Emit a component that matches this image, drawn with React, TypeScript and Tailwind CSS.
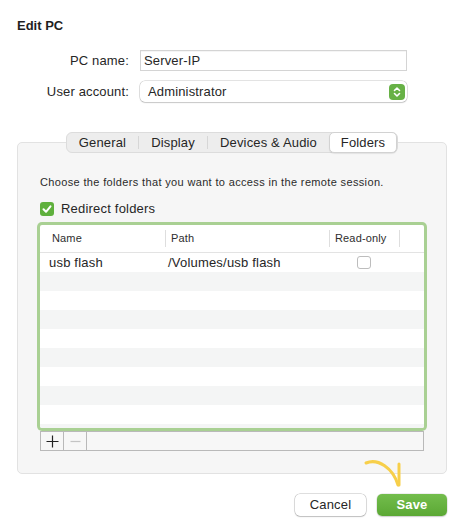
import React from 'react';

const tabs = [
    { label: 'General', width: 'w-[71px]' },
    { label: 'Display', width: 'w-[68px]' },
    { label: 'Devices & Audio', width: 'w-[121px]' },
    { label: 'Folders', width: 'w-[68px]' },
];

const folders = [{ name: 'usb flash', path: '/Volumes/usb flash', readOnly: false }];

const HeaderCell = ({ label, first }: { label?: string; first?: boolean }) => (
    <div className="flex items-center h-full">
        {!first && <span className="h-[17px] w-px bg-[#dedede]" />}
        {label && <span className={first ? 'pl-[12px]' : 'pl-[5px]'}>{label}</span>}
    </div>
);

const App = () => {
    const rows = Array.from({ length: 10 }, (_, i) => folders[i] ?? null);

    return (
        <div className="w-[464px] h-[522px] bg-white text-[#262626] font-['Liberation_Sans',Arial,sans-serif] px-[17px] pt-[18px]">
            <h1 className="text-[13px] leading-[16px] font-bold text-[#1f1f1f]">Edit PC</h1>

            {/* PC name / account */}
            <div className="mt-[16px] grid grid-cols-[112px_267px] gap-x-[11px] gap-y-[10px] items-center text-[13px] tracking-[0.15px]">
                <label className="text-right">PC name:</label>
                <div className="h-[21px] border border-[#d4d4d4] bg-white flex items-center pl-[3px] shadow-[inset_0_1px_0_rgba(0,0,0,0.04)]">
                    Server-IP
                </div>
                <label className="text-right">User account:</label>
                <div className="h-[21px] rounded-[5px] bg-white flex items-center justify-between pl-[8px] pr-[2px] shadow-[0_0_0_0.5px_rgba(0,0,0,0.22),0_1px_1.5px_rgba(0,0,0,0.12)]">
                    <span>Administrator</span>
                    <span className="w-[16px] h-[16px] rounded-[4px] bg-[#67b146] flex items-center justify-center">
                        <svg width="16" height="16" viewBox="0 0 16 16" fill="none" stroke="white" strokeWidth="1.6" strokeLinecap="round" strokeLinejoin="round">
                            <path d="M5.5 6.5 L8 4 L10.5 6.5" />
                            <path d="M5.5 9.5 L8 12 L10.5 9.5" />
                        </svg>
                    </span>
                </div>
            </div>

            {/* Segmented tabs */}
            <div className="relative z-10 mt-[30px] flex justify-center">
                <div className="flex h-[21px] rounded-[6px] bg-[#ededed] border border-[#dcdcdc] text-[13px] tracking-[0.15px]">
                    {tabs.map((tab, i) => {
                        const active = tab.label === 'Folders';
                        return (
                            <div key={tab.label} className="flex items-center">
                                {i > 0 && i < 3 && <span className="h-[13px] w-px bg-[#d6d6d6]" />}
                                <div
                                    className={`${tab.width} h-[21px] -my-px flex items-center justify-center ${
                                        active ? 'bg-white rounded-[5px] border border-[#d2d2d2] shadow-[0_1px_1px_rgba(0,0,0,0.08)]' : ''
                                    }`}
                                >
                                    {tab.label}
                                </div>
                            </div>
                        );
                    })}
                </div>
            </div>

            {/* Folders panel */}
            <div className="-mt-[11px] bg-[#f6f6f6] border border-[#e2e2e2] rounded-[5px] px-[22px] pt-[32px] pb-[22px]">
                <p className="text-[11px] leading-[14px] tracking-[0.35px] text-[#2b2b2b]">
                    Choose the folders that you want to access in the remote session.
                </p>

                <div className="mt-[13px] flex items-center h-[14px] gap-[7px] text-[13px] tracking-[0.2px]">
                    <span className="w-[14px] h-[14px] rounded-[3px] bg-[#5fb03d] flex items-center justify-center">
                        <svg width="14" height="14" viewBox="0 0 14 14" fill="none" stroke="white" strokeWidth="2" strokeLinecap="round" strokeLinejoin="round">
                            <path d="M3.5 7.3 L6 9.8 L10.5 4.3" />
                        </svg>
                    </span>
                    <span>Redirect folders</span>
                </div>

                {/* Folder table */}
                <div className="mt-[9px] h-[203px] bg-white overflow-hidden rounded-[2px] ring-[3px] ring-[#a9d093]">
                    <div className="h-[28px] border-b border-[#e3e3e3] grid grid-cols-[125px_164px_70px_1fr] text-[11px] tracking-[0.15px] text-[#2e2e2e]">
                        <HeaderCell label="Name" first />
                        <HeaderCell label="Path" />
                        <HeaderCell label="Read-only" />
                        <HeaderCell />
                    </div>
                    {rows.map((row, i) => (
                        <div
                            key={i}
                            className={`relative h-[19px] grid grid-cols-[125px_164px_70px_1fr] items-center text-[13px] tracking-[0.2px] ${
                                i % 2 === 1 ? 'bg-[#f4f5f5]' : 'bg-white'
                            }`}
                        >
                            {row && (
                                <>
                                    <span className="pl-[9px]">{row.name}</span>
                                    <span className="pl-[3px]">{row.path}</span>
                                    <span className="flex justify-center">
                                        <span className="w-[14px] h-[13px] rounded-[3px] border border-[#bdbdbd] bg-white" />
                                    </span>
                                    <span />
                                    {/* highlight under the shared folder */}
                                    <span className="absolute left-[9px] top-[22px] w-[335px] h-[2.5px] rounded-full bg-[#f6cd4c]" />
                                </>
                            )}
                        </div>
                    ))}
                </div>

                {/* add / remove bar */}
                <div className="mt-[3px] h-[20px] flex border border-[#b9b9b9] bg-[#f7f7f7]">
                    <button className="w-[23px] h-full border-r border-[#b9b9b9] flex items-center justify-center">
                        <svg width="13" height="13" viewBox="0 0 13 13" stroke="#222" strokeWidth="1.2">
                            <path d="M6.5 0.5 V12.5 M0.5 6.5 H12.5" />
                        </svg>
                    </button>
                    <button className="w-[23px] h-full border-r border-[#b9b9b9] flex items-center justify-center">
                        <svg width="11" height="11" viewBox="0 0 11 11" stroke="#c4c4c4" strokeWidth="1.2">
                            <path d="M0.5 5.5 H10.5" />
                        </svg>
                    </button>
                </div>
            </div>

            {/* Footer buttons */}
            <div className="relative mt-[20px] flex justify-end gap-[11px] text-[13px] tracking-[0.15px]">
                <svg
                    className="absolute left-[343px] -top-[39px]"
                    width="45"
                    height="36"
                    viewBox="0 0 45 36"
                    fill="none"
                    stroke="#f7cf4a"
                    strokeWidth="3"
                    strokeLinecap="round"
                    strokeLinejoin="round"
                >
                    <path d="M6 8 C18 3 33 13 38 30" />
                    <path d="M39 9 L39 30" />
                </svg>
                <button className="w-[71px] h-[22px] rounded-[5px] bg-white shadow-[0_0_0_0.5px_rgba(0,0,0,0.25),0_1px_1.5px_rgba(0,0,0,0.15)] text-[#262626]">
                    Cancel
                </button>
                <button className="w-[70px] h-[22px] rounded-[5px] bg-gradient-to-b from-[#73bd4c] to-[#5ba834] text-white font-bold shadow-[0_0_0_0.5px_rgba(0,0,0,0.12),0_1px_1.5px_rgba(0,0,0,0.15)]">
                    Save
                </button>
            </div>
        </div>
    );
};

export default App;
